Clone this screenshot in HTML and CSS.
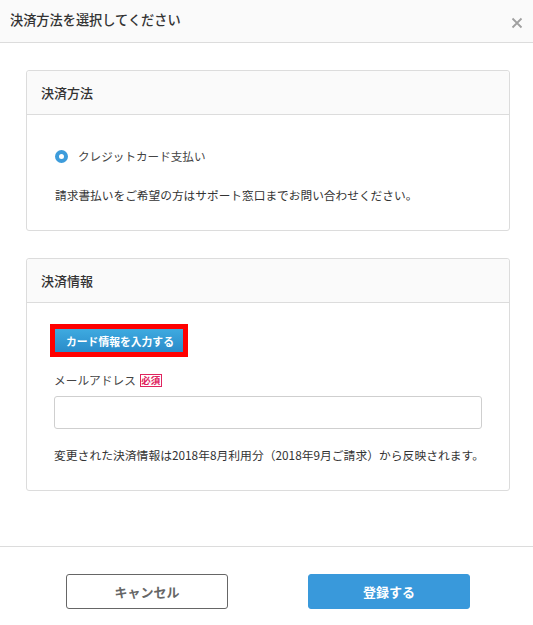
FILE: index.html
```html
<!DOCTYPE html>
<html lang="ja">
<head>
<meta charset="utf-8">
<link rel="stylesheet" href="styles.css">
</head>
<body>
<div class="modal">
  <div class="modal-header">
    <h1 class="modal-title">決済方法を選択してください</h1>
    <span class="close"><svg width="12" height="12" viewBox="0 0 12 12"><path d="M1.5 1.5 L10.5 10.5 M10.5 1.5 L1.5 10.5" stroke="#a0a0a0" stroke-width="1.8" fill="none"/></svg></span>
  </div>
  <div class="modal-body">
    <section class="card">
      <div class="card-header">決済方法</div>
      <div class="card-body card-body-method">
        <div class="radio-row"><span class="radio"></span><span class="radio-label">クレジットカード支払い</span></div>
        <p class="text">請求書払いをご希望の方はサポート窓口までお問い合わせください。</p>
      </div>
    </section>
    <section class="card">
      <div class="card-header">決済情報</div>
      <div class="card-body card-body-info">
        <div class="highlight"><button class="card-btn">カード情報を入力する</button></div>
        <div class="label-row">メールアドレス <span class="required">必須</span></div>
        <div class="input"></div>
        <p class="text note">変更された決済情報は2018年8月利用分（2018年9月ご請求）から反映されます。</p>
      </div>
    </section>
  </div>
  <div class="modal-footer">
    <button class="btn btn-cancel">キャンセル</button>
    <button class="btn btn-primary">登録する</button>
  </div>
</div>
</body>
</html>
```

FILE: styles.css
```css
* { box-sizing: border-box; }
html, body { margin: 0; padding: 0; background: #fff; }
body {
  font-family: "Noto Sans CJK JP", "Noto Sans", sans-serif;
  color: #333;
}
.modal {
  height: 625px;
  display: flex;
  flex-direction: column;
}
.modal-header {
  height: 43px;
  background: #fafafa;
  border-bottom: 1px solid #dcdcdc;
  display: flex;
  align-items: center;
  justify-content: space-between;
  padding: 0 10px 0 10px;
}
.modal-title {
  margin: 0 0 3px 0;
  font-size: 13.2px;
  font-weight: 500;
  color: #333;
  line-height: 18px;
}
.close { display: flex; margin-top: 3px; }
.modal-body {
  flex: 1;
  padding: 27px 23px 0 26px;
}
.card {
  border: 1px solid #dcdcdc;
  border-radius: 3px;
  margin-bottom: 27px;
}
.card-header {
  height: 44px;
  background: #fafafa;
  border-bottom: 1px solid #dcdcdc;
  border-radius: 3px 3px 0 0;
  padding: 0 14px;
  display: flex;
  align-items: center;
  font-size: 13px;
  font-weight: 500;
  color: #333;
}
.card-body { padding: 0 28px; }
.card-body-method { padding-top: 32px; padding-bottom: 26px; }
.radio-row {
  display: flex;
  align-items: center;
  height: 18px;
}
.radio {
  width: 13px;
  height: 13px;
  border-radius: 50%;
  border: 4px solid #3d9cdb;
  background: #fff;
  margin-right: 10px;
}
.radio-label { font-size: 11.6px; color: #444; }
.text {
  margin: 21px 0 0 0;
  font-size: 11.7px;
  line-height: 18px;
  color: #333;
  white-space: nowrap;
}
.card-body-info { padding: 21px 28px 26px 27px; }
.highlight {
  display: inline-block;
  border: 5px solid #ff0000;
  margin-left: -4px;
}
.card-btn {
  display: block;
  border: 0;
  padding: 0 11px;
  height: 23px;
  width: 128px;
  font-family: inherit;
  font-size: 10.8px;
  font-weight: 700;
  color: #fff;
  background: linear-gradient(#3eaae0, #2a8bc9);
  white-space: nowrap;
}
.label-row {
  margin-top: 14px;
  height: 18px;
  line-height: 18px;
  font-size: 11.7px;
  color: #444;
  display: flex;
  align-items: center;
}
.required {
  display: inline-block;
  margin-left: 4px;
  border: 1px solid #e0245e;
  color: #e0245e;
  font-size: 9.5px;
  line-height: 11px;
  height: 13px;
  padding: 0 0.5px;
  font-weight: 700;
}
.input {
  margin-top: 7px;
  height: 33px;
  width: 428px;
  border: 1px solid #cfcfcf;
  border-radius: 3px;
}
.note { margin-top: 17px; font-size: 11.8px; }
.modal-footer {
  height: 79px;
  border-top: 1px solid #dcdcdc;
  display: flex;
  justify-content: center;
  align-items: flex-start;
  gap: 80px;
  padding-top: 27px;
  padding-left: 3px;
}
.btn {
  width: 162px;
  height: 35px;
  border-radius: 3px;
  font-family: inherit;
  font-size: 13px;
  font-weight: 700;
}
.btn-cancel {
  background: #fff;
  border: 1px solid #666;
  color: #666;
}
.btn-primary {
  background: #3999db;
  border: 1px solid #3999db;
  color: #fff;
}
```
